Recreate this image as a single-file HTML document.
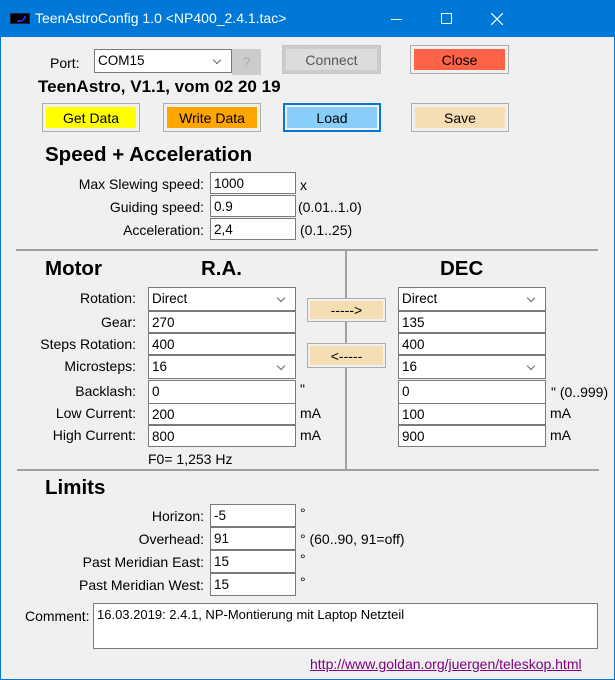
<!DOCTYPE html>
<html><head><meta charset="utf-8"><style>
*{box-sizing:border-box;margin:0;padding:0}
body{width:615px;height:680px;overflow:hidden;background:#f0f0f0;font-family:"Liberation Sans",sans-serif;font-size:14px;color:#000;position:relative}
.a{position:absolute;white-space:nowrap}
.tb{left:0;top:0;width:615px;height:37px;background:#0078d7;color:#fff;font-size:14px}
.frame{left:0;top:0;width:615px;height:680px;border:1px solid #0078d7;border-top:none}
.in{position:absolute;background:#fff;border:1px solid #7a7a7a;padding:2px 0 0 3px;font-size:13.5px;line-height:17px}
.cb::after{content:"";position:absolute;right:11px;top:7px;width:5px;height:5px;border-right:1px solid #666;border-bottom:1px solid #666;transform:rotate(45deg)}
.btn{position:absolute;border:1px solid #adadad;text-align:center;font-size:14px}
.btn span{position:absolute;left:3px;right:3px;top:3px;bottom:3px;display:flex;align-items:center;justify-content:center}
.r{text-align:right}
.h{font-weight:bold;font-size:20.5px}
.line{position:absolute;background:#a0a0a0}
</style></head><body>
<div class="a tb">
 <div class="a" style="left:10px;top:13px;width:20px;height:11px;background:#000;border:1px solid #224"><div class="a" style="left:6px;top:2px;width:9px;height:6px;border-bottom:2px solid #2a2acc;border-right:2px solid #2a2acc;border-radius:0 0 6px 0"></div></div>
 <div class="a" style="left:35px;top:10px">TeenAstroConfig 1.0 &lt;NP400_2.4.1.tac&gt;</div>
 <div class="a" style="left:391px;top:19px;width:11px;height:1px;background:#fff"></div>
 <div class="a" style="left:441px;top:13px;width:11px;height:11px;border:1px solid #fff"></div>
 <svg class="a" style="left:491px;top:13px" width="12" height="12"><path d="M0 0L12 12M12 0L0 12" stroke="#fff" stroke-width="1.2"/></svg>
</div>
<div class="a frame"></div>

<div class="a" style="left:50px;top:55px">Port:</div>
<div class="in cb" style="left:94px;top:49px;width:138px;height:24px">COM15</div>
<div class="btn" style="left:232px;top:49px;width:29px;height:26px;background:#ccc;border-color:#ccc;color:#aaa"><span>?</span></div>
<div class="btn" style="left:282px;top:45px;width:99px;height:29px;background:#ccc;border-color:#c4c4c4;color:#555"><span style="background:#dcdcdc">Connect</span></div>
<div class="btn" style="left:410px;top:45px;width:99px;height:29px;background:#f0f0f0"><span style="background:#ff6347">Close</span></div>
<div class="a" style="left:38px;top:77px;font-weight:bold;font-size:17px">TeenAstro, V1.1, vom 02 20 19</div>
<div class="btn" style="left:42px;top:103px;width:98px;height:29px;background:#f0f0f0"><span style="background:#ffff00">Get Data</span></div>
<div class="btn" style="left:163px;top:103px;width:98px;height:29px;background:#f0f0f0"><span style="background:#ffa500">Write Data</span></div>
<div class="btn" style="left:283px;top:103px;width:98px;height:29px;background:#f0f0f0;border:2px solid #0078d7"><span style="background:#87cefa;left:2px;right:2px;top:2px;bottom:2px">Load</span></div>
<div class="btn" style="left:411px;top:103px;width:98px;height:29px;background:#f0f0f0"><span style="background:#f5deb3">Save</span></div>

<div class="a h" style="left:45px;top:143px">Speed + Acceleration</div>
<div class="a r" style="left:0;width:204px;top:176px">Max Slewing speed:</div>
<div class="in" style="left:210px;top:172px;width:86px;height:22px">1000</div>
<div class="a" style="left:300px;top:177px">x</div>
<div class="a r" style="left:0;width:204px;top:199px">Guiding speed:</div>
<div class="in" style="left:210px;top:195px;width:86px;height:22px">0.9</div>
<div class="a" style="left:298px;top:199px">(0.01..1.0)</div>
<div class="a r" style="left:0;width:204px;top:222px">Acceleration:</div>
<div class="in" style="left:210px;top:218px;width:86px;height:22px">2,4</div>
<div class="a" style="left:300px;top:222px">(0.1..25)</div>

<div class="line" style="left:16px;top:249px;width:582px;height:2px"></div>
<div class="line" style="left:345px;top:250px;width:2px;height:220px"></div>
<div class="line" style="left:17px;top:469px;width:582px;height:2px"></div>

<div class="a h" style="left:45px;top:257px">Motor</div>
<div class="a h" style="left:201px;top:257px">R.A.</div>
<div class="a h" style="left:440px;top:257px">DEC</div>

<div class="a r" style="left:0;width:136px;top:290px">Rotation:</div>
<div class="a r" style="left:0;width:136px;top:314px">Gear:</div>
<div class="a r" style="left:0;width:136px;top:336px">Steps Rotation:</div>
<div class="a r" style="left:0;width:136px;top:358px">Microsteps:</div>
<div class="a r" style="left:0;width:136px;top:383px">Backlash:</div>
<div class="a r" style="left:0;width:136px;top:405px">Low Current:</div>
<div class="a r" style="left:0;width:136px;top:427px">High Current:</div>

<div class="in cb" style="left:148px;top:287px;width:148px;height:24px">Direct</div>
<div class="in" style="left:148px;top:311px;width:148px;height:22px">270</div>
<div class="in" style="left:148px;top:333px;width:148px;height:22px">400</div>
<div class="in cb" style="left:148px;top:355px;width:148px;height:24px">16</div>
<div class="in" style="left:148px;top:380px;width:148px;height:24px">0</div>
<div class="in" style="left:148px;top:403px;width:148px;height:22px">200</div>
<div class="in" style="left:148px;top:425px;width:148px;height:22px">800</div>
<div class="a" style="left:300px;top:381px">"</div>
<div class="a" style="left:300px;top:405px">mA</div>
<div class="a" style="left:300px;top:427px">mA</div>
<div class="a" style="left:148px;top:451px">F0= 1,253 Hz</div>

<div class="btn" style="left:307px;top:298px;width:79px;height:24px;background:#f0f0f0"><span style="background:#f5deb3;left:2px;right:2px;top:2px;bottom:2px">-----&gt;</span></div>
<div class="btn" style="left:307px;top:343px;width:79px;height:25px;background:#f0f0f0"><span style="background:#f5deb3;left:2px;right:2px;top:2px;bottom:2px">&lt;-----</span></div>

<div class="in cb" style="left:398px;top:287px;width:148px;height:24px">Direct</div>
<div class="in" style="left:398px;top:311px;width:148px;height:22px">135</div>
<div class="in" style="left:398px;top:333px;width:148px;height:22px">400</div>
<div class="in cb" style="left:398px;top:355px;width:148px;height:24px">16</div>
<div class="in" style="left:398px;top:380px;width:148px;height:24px">0</div>
<div class="in" style="left:398px;top:403px;width:148px;height:22px">100</div>
<div class="in" style="left:398px;top:425px;width:148px;height:22px">900</div>
<div class="a" style="left:551px;top:384px">" (0..999)</div>
<div class="a" style="left:550px;top:405px">mA</div>
<div class="a" style="left:550px;top:427px">mA</div>

<div class="a h" style="left:45px;top:476px">Limits</div>
<div class="a r" style="left:0;width:204px;top:508px">Horizon:</div>
<div class="a r" style="left:0;width:204px;top:531px">Overhead:</div>
<div class="a r" style="left:0;width:204px;top:554px">Past Meridian East:</div>
<div class="a r" style="left:0;width:204px;top:577px">Past Meridian West:</div>
<div class="in" style="left:210px;top:504px;width:86px;height:23px">-5</div>
<div class="in" style="left:210px;top:527px;width:86px;height:23px">91</div>
<div class="in" style="left:210px;top:550px;width:86px;height:23px">15</div>
<div class="in" style="left:210px;top:573px;width:86px;height:23px">15</div>
<div class="a" style="left:300px;top:505px">°</div>
<div class="a" style="left:300px;top:531px">° (60..90, 91=off)</div>
<div class="a" style="left:300px;top:551px">°</div>
<div class="a" style="left:300px;top:574px">°</div>

<div class="a" style="left:25px;top:608px">Comment:</div>
<div class="in" style="left:93px;top:603px;width:505px;height:46px;font-size:13px">16.03.2019: 2.4.1, NP-Montierung mit Laptop Netzteil</div>
<div class="a" style="left:310px;top:656px;color:#800080;text-decoration:underline">http://www.goldan.org/juergen/teleskop.html</div>
</body></html>
